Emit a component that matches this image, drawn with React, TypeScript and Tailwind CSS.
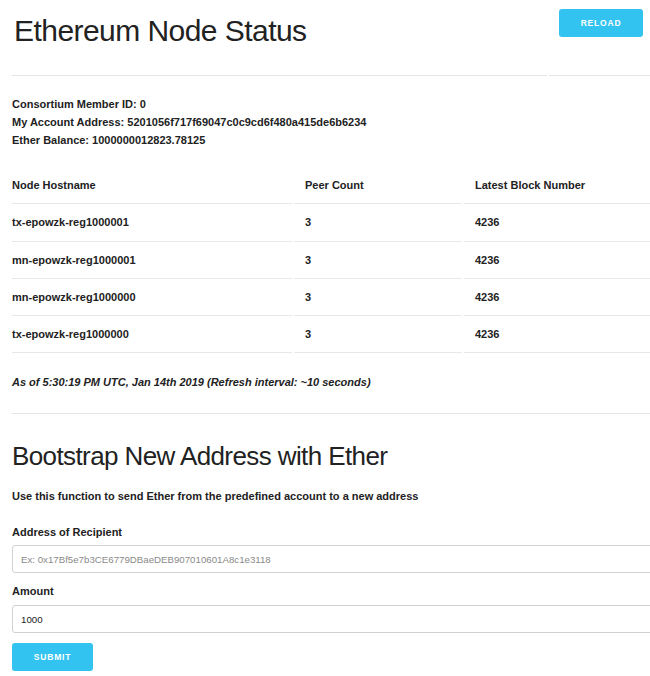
const nodes = [
  { host: "tx-epowzk-reg1000001", peers: 3, block: 4236 },
  { host: "mn-epowzk-reg1000001", peers: 3, block: 4236 },
  { host: "mn-epowzk-reg1000000", peers: 3, block: 4236 },
  { host: "tx-epowzk-reg1000000", peers: 3, block: 4236 },
]

export default function App() {
  return (
    <div className="w-[650px] h-[676px] overflow-hidden bg-white text-[#222] font-['Liberation_Sans',Arial,sans-serif]">
      <div className="w-[720px] pl-[12px]">
        {/* header */}
        <div className="flex gap-[2px]">
          <div className="w-[535px] h-[76px] border-b border-[#e5e5e5]">
            <h1 className="mt-[13px] ml-[2px] text-[30px] leading-[36px] font-light tracking-[-0.55px]">
              Ethereum Node Status
            </h1>
          </div>
          <div className="flex-1 h-[76px] border-b border-[#e5e5e5] pl-[10px] pt-[9px]">
            <button className="w-[84px] h-[28px] rounded-[3px] bg-[#33c3f0] text-white text-[8.5px] font-bold tracking-[0.8px]">
              RELOAD
            </button>
          </div>
        </div>

        <div className="mt-[19px] text-[11px] leading-[18px] font-bold">
          <div>Consortium Member ID: 0</div>
          <div>My Account Address: 5201056f717f69047c0c9cd6f480a415de6b6234</div>
          <div>Ether Balance: 1000000012823.78125</div>
        </div>

        <table className="mt-[18px] -ml-[2px] w-[690px] border-separate border-spacing-x-[2px] border-spacing-y-0 text-[11px] leading-[18.3px] text-left font-bold">
          <thead>
            <tr>
              <th className="w-[280px] pr-[11px] py-[9px] border-b border-[#e8e8e8]">Node Hostname</th>
              <th className="w-[168px] px-[11px] py-[9px] border-b border-[#e8e8e8]">Peer Count</th>
              <th className="px-[11px] py-[9px] border-b border-[#e8e8e8]">Latest Block Number</th>
            </tr>
          </thead>
          <tbody>
            {nodes.map((n) => (
              <tr key={n.host}>
                <td className="pr-[11px] py-[9px] border-b border-[#e8e8e8]">{n.host}</td>
                <td className="px-[11px] py-[9px] border-b border-[#e8e8e8]">{n.peers}</td>
                <td className="px-[11px] py-[9px] border-b border-[#e8e8e8]">{n.block}</td>
              </tr>
            ))}
          </tbody>
        </table>

        <p className="mt-[20px] text-[11px] leading-[18px] font-bold italic">
          As of 5:30:19 PM UTC, Jan 14th 2019 (Refresh interval: ~10 seconds)
        </p>

        <hr className="mt-[22px] border-t border-[#e5e5e5]" />

        <h2 className="mt-[26px] text-[26px] leading-[32px] font-light tracking-[-0.6px]">
          Bootstrap New Address with Ether
        </h2>

        <p className="mt-[15px] text-[11px] leading-[18px] font-bold">
          Use this function to send Ether from the predefined account to a new address
        </p>

        <form className="mt-[18px]" onSubmit={(e) => e.preventDefault()}>
          <label className="block text-[11px] leading-[18px] font-bold">Address of Recipient</label>
          <input
            className="mt-[4px] block w-full h-[28px] px-[8px] rounded-[3px] border border-[#d1d1d1] text-[9.7px] placeholder:text-[#8a8a8a] outline-none"
            placeholder="Ex: 0x17Bf5e7b3CE6779DBaeDEB907010601A8c1e3118"
          />
          <label className="block mt-[9px] text-[11px] leading-[18px] font-bold">Amount</label>
          <input
            className="mt-[5px] block w-full h-[28px] px-[8px] rounded-[3px] border border-[#d1d1d1] text-[9.7px] text-[#222] outline-none"
            defaultValue="1000"
          />
          <button
            type="submit"
            className="mt-[10px] w-[81px] h-[28px] rounded-[3px] bg-[#33c3f0] text-white text-[8.5px] font-bold tracking-[0.8px]"
          >
            SUBMIT
          </button>
        </form>
      </div>
    </div>
  )
}
